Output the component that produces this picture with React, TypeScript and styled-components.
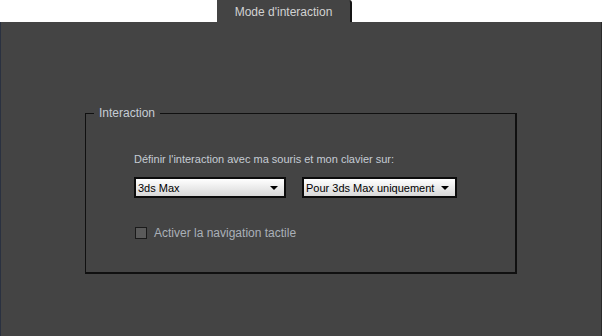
import styled, { createGlobalStyle } from "styled-components";

const GlobalStyle = createGlobalStyle`
  html, body {
    margin: 0;
    padding: 0;
    background: #ffffff;
  }
  body {
    font-family: "Liberation Sans", Arial, sans-serif;
    font-size: 11px;
  }
`;

export default function App() {
  return (
    <Page>
      <GlobalStyle />
      <TabStrip>
        <Tab>Mode d'interaction</Tab>
      </TabStrip>
      <Panel>
        <Group>
          <Legend>Interaction</Legend>
          <Label>Définir l'interaction avec ma souris et mon clavier sur:</Label>
          <SelectRow>
            <Select $width={152}>
              <span>3ds Max</span>
              <Arrow />
            </Select>
            <Select $width={155}>
              <span>Pour 3ds Max uniquement</span>
              <Arrow />
            </Select>
          </SelectRow>
          <CheckRow>
            <CheckBox />
            <CheckLabel>Activer la navigation tactile</CheckLabel>
          </CheckRow>
        </Group>
      </Panel>
    </Page>
  );
}

const Page = styled.div`
  width: 602px;
  height: 336px;
  display: flex;
  flex-direction: column;
  overflow: hidden;
`;

const TabStrip = styled.div`
  height: 22px;
  display: flex;
  padding-left: 217px;
  background: #ffffff;
`;

const Tab = styled.div`
  width: 135px;
  height: 22px;
  background: #444444;
  border-right: 2px solid #151515;
  border-top-right-radius: 3px;
  color: #d2d2d2;
  font-size: 12px;
  display: flex;
  align-items: center;
  justify-content: center;
  padding-top: 1px;
  box-sizing: border-box;
`;

const Panel = styled.div`
  flex: 1;
  background: #444444;
  border-left: 1px solid #2a3140;
  border-right: 1px solid #2a2a2a;
  padding: 91px 0 0 84px;
`;

const Group = styled.div`
  position: relative;
  width: 432px;
  height: 161px;
  border: 1px solid #101010;
  border-right-width: 2px;
  border-bottom-width: 2px;
  padding: 38px 0 0 48px;
  box-sizing: border-box;
`;

const Legend = styled.span`
  position: absolute;
  top: -8px;
  left: 8px;
  padding: 0 5px;
  background: #444444;
  color: #c6ccd4;
  font-size: 12px;
`;

const Label = styled.div`
  color: #c6ccd4;
  line-height: 14px;
`;

const SelectRow = styled.div`
  display: flex;
  gap: 16px;
  margin-top: 11px;
`;

const Select = styled.div<{ $width: number }>`
  width: ${({ $width }) => $width}px;
  height: 21px;
  box-sizing: border-box;
  border: 2px solid #0c0c0c;
  background: linear-gradient(#ffffff, #d8d8d8);
  color: #000000;
  font-size: 11px;
  white-space: nowrap;
  display: flex;
  align-items: center;
  justify-content: space-between;
  padding: 0 6px 0 2px;
`;

const Arrow = styled.span`
  width: 0;
  height: 0;
  border-left: 4px solid transparent;
  border-right: 4px solid transparent;
  border-top: 4px solid #000000;
`;

const CheckRow = styled.div`
  display: flex;
  align-items: center;
  gap: 7px;
  margin-top: 28px;
  margin-left: 1px;
`;

const CheckBox = styled.span`
  width: 12px;
  height: 12px;
  box-sizing: border-box;
  border: 1px solid #1a1a1a;
  background: #5a5a5a;
`;

const CheckLabel = styled.span`
  color: #aab0b8;
  font-size: 12px;
`;
